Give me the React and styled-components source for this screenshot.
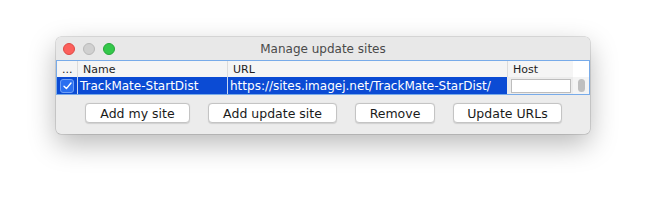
import React from "react";
import styled, { createGlobalStyle } from "styled-components";

const GlobalStyle = createGlobalStyle`
  html, body {
    margin: 0;
    padding: 0;
    background: #ffffff;
  }
  body {
    font-family: "DejaVu Sans", "Liberation Sans", sans-serif;
  }
`;

const Page = styled.div`
  width: 646px;
  height: 209px;
  padding: 37px 0 0 56px;
  box-sizing: border-box;
`;

const Window = styled.div`
  width: 534px;
  height: 97px;
  background: #ececec;
  border-radius: 5px;
  box-shadow: 0 0 0 0.5px rgba(0, 0, 0, 0.22), 0 10px 28px rgba(0, 0, 0, 0.28);
  overflow: hidden;
  display: flex;
  flex-direction: column;
`;

const TitleBar = styled.div`
  height: 23px;
  display: flex;
  align-items: center;
  position: relative;
  background: #e8e8e8;
`;

const Lights = styled.div`
  display: flex;
  gap: 8px;
  padding-left: 7px;
`;

const Light = styled.span`
  width: 12px;
  height: 12px;
  border-radius: 50%;
  box-sizing: border-box;
  background: ${(p) => p.$color};
  border: 0.5px solid ${(p) => p.$edge};
`;

const Title = styled.div`
  position: absolute;
  left: 0;
  right: 0;
  text-align: center;
  font-size: 12px;
  color: #4a4a4a;
  pointer-events: none;
`;

const Table = styled.div`
  border: 1px solid #78abe9;
  background: #ffffff;
  display: grid;
  grid-template-columns: 20px 150px 280px 66px 16px;
  grid-template-rows: 16px 17px;
`;

const HeadCell = styled.div`
  background: #f5f5f5;
  font-size: 11px;
  color: #1e1e1e;
  display: flex;
  align-items: center;
  padding-left: ${(p) => p.$pad || 5}px;
  border-left: ${(p) => (p.$first ? "none" : "1px solid #dcdcdc")};
  white-space: nowrap;
  overflow: hidden;
`;

const Corner = styled.div`
  background: #ffffff;
`;

const Cell = styled.div`
  background: #0b4bd4;
  color: #ffffff;
  font-size: 12px;
  display: flex;
  align-items: center;
  padding-left: ${(p) => p.$pad ?? 2}px;
  border-left: ${(p) => (p.$first ? "none" : "1px solid #c9d6f2")};
  white-space: nowrap;
  overflow: hidden;
`;

const EditCell = styled.div`
  background: #ececec;
  display: flex;
  align-items: center;
  padding: 1px 2px 0 4px;
`;

const Field = styled.div`
  flex: 1;
  height: 14px;
  background: #ffffff;
  border: 1px solid #bdbdbd;
  box-sizing: border-box;
`;

const ScrollCell = styled.div`
  background: #f4f4f4;
  display: flex;
  justify-content: center;
  align-items: center;
`;

const Thumb = styled.div`
  width: 7px;
  height: 13px;
  border-radius: 4px;
  background: #bfbfbf;
`;

const Check = styled.div`
  width: 14px;
  height: 14px;
  margin-left: 2px;
  border-radius: 3px;
  background: #2a6ff0;
  border: 1px solid #6f9ff5;
  box-sizing: border-box;
  display: flex;
  align-items: center;
  justify-content: center;
`;

const ButtonRow = styled.div`
  display: flex;
  justify-content: center;
  gap: 18px;
  padding-top: 8px;
  padding-left: 1px;
`;

const Button = styled.button`
  width: ${(p) => p.$w}px;
  height: 20px;
  background: #ffffff;
  border: 1px solid #c4c4c4;
  border-radius: 4px;
  box-shadow: 0 0.5px 1px rgba(0, 0, 0, 0.12);
  font-family: "DejaVu Sans", "Liberation Sans", sans-serif;
  font-size: 12.5px;
  color: #1a1a1a;
  padding: 0;
`;

export default function App() {
  return (
    <Page>
      <GlobalStyle />
      <Window>
        <TitleBar>
          <Lights>
            <Light $color="#fc605c" $edge="#de4a45" />
            <Light $color="#d0d0d0" $edge="#b9b9b9" />
            <Light $color="#34c84a" $edge="#27a73a" />
          </Lights>
          <Title>Manage update sites</Title>
        </TitleBar>
        <Table>
          <HeadCell $first $pad={5}>...</HeadCell>
          <HeadCell>Name</HeadCell>
          <HeadCell>URL</HeadCell>
          <HeadCell>Host</HeadCell>
          <Corner />
          <Cell $first $pad={1}>
            <Check>
              <svg width="9" height="8" viewBox="0 0 9 8">
                <path d="M1 4.2 L3.4 6.6 L8 1" fill="none" stroke="#ffffff" strokeWidth="1.4" strokeLinecap="round" strokeLinejoin="round" />
              </svg>
            </Check>
          </Cell>
          <Cell>TrackMate-StartDist</Cell>
          <Cell>https://sites.imagej.net/TrackMate-StarDist/</Cell>
          <EditCell>
            <Field />
          </EditCell>
          <ScrollCell>
            <Thumb />
          </ScrollCell>
        </Table>
        <ButtonRow>
          <Button $w={105}>Add my site</Button>
          <Button $w={129}>Add update site</Button>
          <Button $w={80}>Remove</Button>
          <Button $w={109}>Update URLs</Button>
        </ButtonRow>
      </Window>
    </Page>
  );
}
